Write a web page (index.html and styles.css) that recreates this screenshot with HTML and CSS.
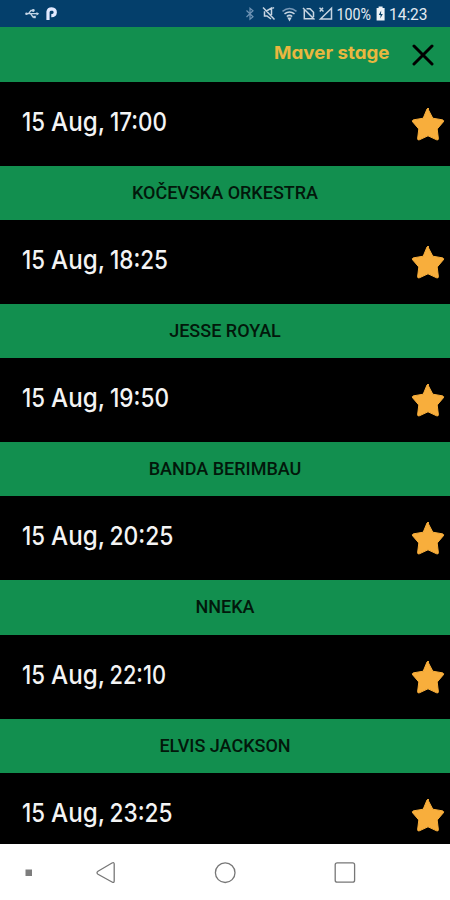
FILE: index.html
```html
<!DOCTYPE html>
<html lang="en">
<head>
<meta charset="utf-8">
<title>Maver stage</title>
<link rel="stylesheet" href="styles.css">
</head>
<body>
<svg class="defs" aria-hidden="true"><symbol id="star" viewBox="0 0 34 34"><path d="M17 2 21.8 11.2 31.8 12.9Q33.4 13.6 32.2 15L26.2 22 27.4 31.8Q27.2 33.5 25.6 32.8L17 28.8 8.4 32.8Q6.8 33.5 6.6 31.8L7.8 22 1.8 15Q.6 13.6 2.2 12.9L12.2 11.2 16 2Q17 .6 18 2Z" fill="#f8ae3c" stroke="#f8ae3c" stroke-linejoin="round"/></symbol></svg>
<div class="screen">
  <header class="status">
    <svg class="status-art" viewBox="0 0 450 27">
      <g fill="none" stroke="#c4d5e6" stroke-width="1.3">
        <path d="M26 13.7H38M28.5 13.7 31 10.5H33M30.5 13.7 33 17H35"/>
        <path d="M36.5 11.9 39.2 13.7 36.5 15.5Z" fill="#c4d5e6" stroke="none"/>
        <circle cx="26.5" cy="13.7" r="1.3" fill="#c4d5e6" stroke="none"/><circle cx="33.3" cy="10.5" r="1.4" fill="#c4d5e6" stroke="none"/><path d="M33.4 15.8h2.4v2.4h-2.4Z" fill="#c4d5e6" stroke="none"/>
      </g>
      <path d="M48 20V11.8Q48.4 8.9 51.7 8.9Q55.3 9.1 55.3 12.4Q55 15.8 51.3 15.7" fill="none" stroke="#e2eaff" stroke-width="3.2"/>
      <path d="M246.5 10.5 253 16.8 250 19.2V8.2L253 10.7 246.5 17" fill="none" stroke="#6f94b5" stroke-width="1.2"/>
      <g fill="none" stroke="#c7d5e2" stroke-width="1.5">
        <path d="M263 7.5 274.5 19.5M264.5 11.2V16H267L271 19M266.5 11 271.5 8V15M272.5 8.5 274 7.5"/>
        <path d="M282.5 11.3Q289.5 5.8 296.5 11.3" stroke="#7899b8"/>
        <path d="M284.5 13.8Q289.5 10 294.5 13.8M286.8 16.5Q289.5 14.2 292.2 16.5"/>
        <path d="M288.5 18.2 289.5 20 290.5 18.2Z"/>
        <path d="M303 8 314.5 19.5M304.3 10V18.7H313M306.5 8.7H310L313.5 12.3V17"/>
        <path d="M320.5 19 331.5 8.3V19ZM319.5 7.8 323.5 11.5M323 7.8 319.8 11.5"/>
      </g>
      <path d="M378.6 6.5h4v1.5h2V20.5h-8V8h2Z" fill="#eef3f7"/><path d="M381.2 10.5 378.8 15h1.8L380.3 18.5 382.8 14h-1.8Z" fill="#064169"/>
      <text class="status-text" x="336.5" y="19.5" textLength="34.5" lengthAdjust="spacingAndGlyphs">100%</text>
      <text class="status-text" x="389" y="19.5" textLength="38.5" lengthAdjust="spacingAndGlyphs">14:23</text>
    </svg>
  </header>
  <div class="heading">
    <svg class="title" viewBox="0 0 116 55"><text x="0" y="32" textLength="115.5" lengthAdjust="spacingAndGlyphs">Maver stage</text></svg>
    <svg class="close" viewBox="0 0 22 22"><path d="M2 2 20 20M20 2 2 20"/></svg>
  </div>
  <main class="list">
    <div class="slot"><svg class="time" viewBox="0 0 180 84"><text x="-1" y="48.5" textLength="23" lengthAdjust="spacingAndGlyphs">15</text><text x="28" y="48.5" textLength="54" lengthAdjust="spacingAndGlyphs">Aug,</text><text x="87" y="48.5" textLength="57" lengthAdjust="spacingAndGlyphs">17:00</text></svg><svg class="star"><use href="#star"/></svg></div>
    <div class="band">KOČEVSKA ORKESTRA</div>
    <div class="slot"><svg class="time" viewBox="0 0 180 84"><text x="-1" y="48.5" textLength="23" lengthAdjust="spacingAndGlyphs">15</text><text x="28" y="48.5" textLength="54" lengthAdjust="spacingAndGlyphs">Aug,</text><text x="87" y="48.5" textLength="58" lengthAdjust="spacingAndGlyphs">18:25</text></svg><svg class="star"><use href="#star"/></svg></div>
    <div class="band">JESSE ROYAL</div>
    <div class="slot"><svg class="time" viewBox="0 0 180 84"><text x="-1" y="48.5" textLength="23" lengthAdjust="spacingAndGlyphs">15</text><text x="28" y="48.5" textLength="54" lengthAdjust="spacingAndGlyphs">Aug,</text><text x="87" y="48.5" textLength="59" lengthAdjust="spacingAndGlyphs">19:50</text></svg><svg class="star"><use href="#star"/></svg></div>
    <div class="band">BANDA BERIMBAU</div>
    <div class="slot"><svg class="time" viewBox="0 0 180 84"><text x="-1" y="48.5" textLength="23" lengthAdjust="spacingAndGlyphs">15</text><text x="28" y="48.5" textLength="54" lengthAdjust="spacingAndGlyphs">Aug,</text><text x="86.5" y="48.5" textLength="64" lengthAdjust="spacingAndGlyphs">20:25</text></svg><svg class="star"><use href="#star"/></svg></div>
    <div class="band">NNEKA</div>
    <div class="slot"><svg class="time" viewBox="0 0 180 84"><text x="-1" y="48.5" textLength="23" lengthAdjust="spacingAndGlyphs">15</text><text x="28" y="48.5" textLength="54" lengthAdjust="spacingAndGlyphs">Aug,</text><text x="86.5" y="48.5" textLength="56.5" lengthAdjust="spacingAndGlyphs">22:10</text></svg><svg class="star"><use href="#star"/></svg></div>
    <div class="band">ELVIS JACKSON</div>
    <div class="slot"><svg class="time" viewBox="0 0 180 84"><text x="-1" y="48.5" textLength="23" lengthAdjust="spacingAndGlyphs">15</text><text x="28" y="48.5" textLength="54" lengthAdjust="spacingAndGlyphs">Aug,</text><text x="86.5" y="48.5" textLength="63" lengthAdjust="spacingAndGlyphs">23:25</text></svg><svg class="star"><use href="#star"/></svg></div>
  </main>
  <nav class="nav">
    <svg viewBox="0 0 450 56"><path d="M25.5 25.5h6.5v6.5h-6.5Z" fill="#7d7d7d"/>
      <g fill="none" stroke="#777" stroke-width="1.3"><path d="M98 27.2 112 19Q114.2 18 114.2 20V37Q114.2 39.3 112 38L98 30.2Q96 28.8 98 27.2Z"/><circle cx="225.2" cy="28.7" r="9.8"/><rect x="335.2" y="18.8" width="19.4" height="19.4" rx="2"/></g>
    </svg>
  </nav>
</div>
</body>
</html>
```
FILE: styles.css
```css
* { box-sizing: border-box; }
body { margin: 0; background: #000; }
svg { display: block; flex: none; }
.defs { width: 0; height: 0; position: absolute; }
.screen { width: 450px; height: 900px; display: flex; flex-direction: column; overflow: hidden; }
.status { height: 27px; flex: none; background: #043f6b; }
.status-art { width: 450px; height: 27px; }
.status-text { font: 16px Roboto, sans-serif; fill: #e3ebf2; }
.heading { height: 55px; flex: none; background: #128f4f; display: flex; align-items: center; justify-content: flex-end; gap: 22px; padding-right: 16px; }
.title { width: 116px; height: 55px; }
.title text { font: 700 18px Inter, sans-serif; font-feature-settings: "cv11"; fill: #e9b73f; }
.close { width: 22px; height: 22px; }
.close path { fill: none; stroke: #000; stroke-width: 3; stroke-linecap: round; }
.list { flex: 1; min-height: 0; overflow: hidden; background: #000; }
.slot { height: 84px; display: flex; align-items: center; justify-content: space-between; padding: 0 5px 0 23px; }
.time { width: 180px; height: 84px; overflow: visible; }
.time text { font: 500 26px Inter, sans-serif; fill: #f4f4f4; }
.star { width: 34px; height: 34px; }
.band { height: 54.15px; background: #128f4f; display: flex; align-items: center; justify-content: center; font: 500 18px Roboto, sans-serif; color: #02180b; padding-bottom: 1px; }
.nav { height: 56px; flex: none; background: #fff; }
.nav svg { width: 450px; height: 56px; }
```
